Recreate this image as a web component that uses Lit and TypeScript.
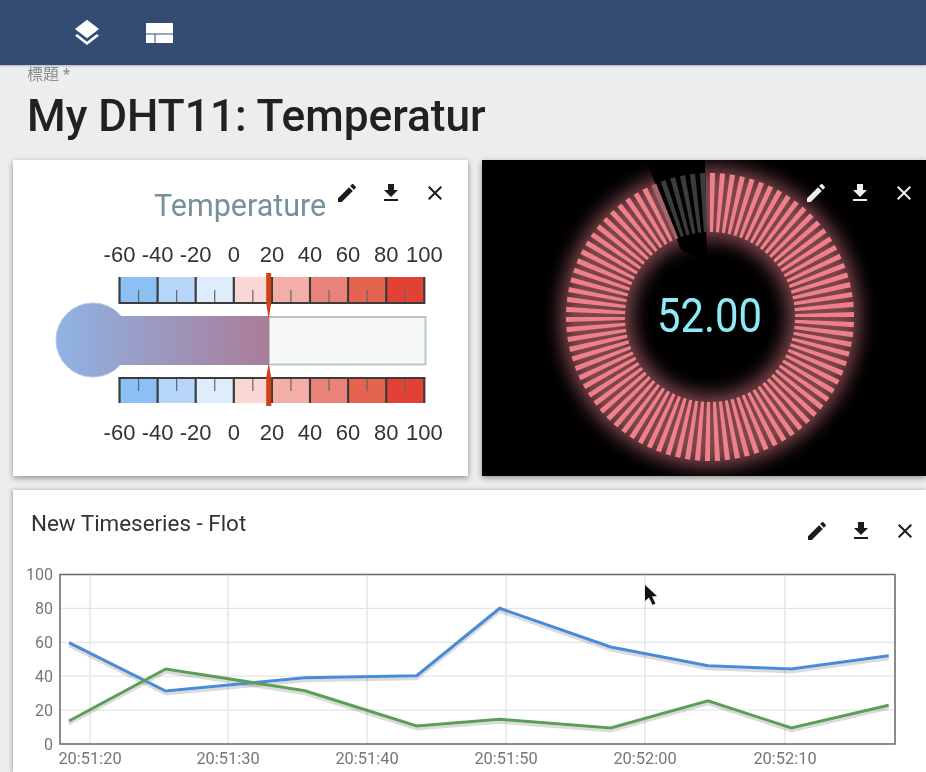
import { LitElement, css, html, svg } from 'lit';
import { customElement } from 'lit/decorators.js';

const EDIT = 'M3 17.25V21h3.75L17.81 9.94l-3.75-3.75L3 17.25zM20.71 7.04c.39-.39.39-1.02 0-1.41l-2.34-2.34c-.39-.39-1.02-.39-1.41 0l-1.83 1.83 3.75 3.75 1.83-1.83z';
const DOWNLOAD = 'M19 9h-4V3H9v6H5l7 7 7-7zM5 18v2h14v-2H5z';
const CLOSE = 'M19 6.41L17.59 5 12 10.59 6.41 5 5 6.41 10.59 12 5 17.59 6.41 19 12 13.41 17.59 19 19 17.59 13.41 12z';

const SCALE = [-60, -40, -20, 0, 20, 40, 60, 80, 100];
const CELLS = ['#8cc0f4', '#b5d6f8', '#deecfc', '#f8d7d5', '#f3aea8', '#e98379', '#e4644f', '#e24235'];
const STEP = 38.1;
const X0 = 119.5;

const TIMES = [
  [90, '20:51:20'],
  [228, '20:51:30'],
  [367, '20:51:40'],
  [506, '20:51:50'],
  [645, '20:52:00'],
  [785, '20:52:10'],
] as const;
const BLUE = '69,642.7 165.7,691 305,677.7 416.7,675.7 499.7,608.3 610.7,647 708,665.7 791.3,669 888.7,655.7';
const GREEN = '69,721 165.7,669 305,690.7 416.7,726 499.7,719.3 610.7,728 708,700.7 791.3,728 888.7,705.3';

function icon(d: string) {
  return html`<svg class="icon" viewBox="0 0 24 24"><path d=${d}></path></svg>`;
}

function actions() {
  return html`${icon(EDIT)}${icon(DOWNLOAD)}${icon(CLOSE)}`;
}

function scaleRow(y: number, tickY1: number, tickY2: number, lineY: number) {
  return svg`
    ${CELLS.map((c, i) => svg`<rect x=${X0 + STEP * i} y=${y} width=${STEP} height="26" fill=${c}></rect>`)}
    ${SCALE.map((_, i) => svg`<line x1=${X0 + STEP * i} x2=${X0 + STEP * i} y1=${y} y2=${y + 26} stroke="#3c3c3c" stroke-width="2.200"></line>`)}
    ${CELLS.map((_, i) => svg`<line x1=${X0 + STEP * (i + 0.5)} x2=${X0 + STEP * (i + 0.5)} y1=${tickY1} y2=${tickY2} stroke="#666" stroke-width="1.200"></line>`)}
    <line x1=${X0 - 1} x2=${X0 + STEP * 8 + 1} y1=${lineY} y2=${lineY} stroke="#3c3c3c" stroke-width="2.200"></line>
  `;
}

function thermometer() {
  return svg`
    <svg class="fill" viewBox="13 160 455 316">
      <defs>
        <linearGradient id="mercury" gradientUnits="userSpaceOnUse" x1="56" x2="269" y1="0" y2="0">
          <stop offset="0" stop-color="#8fb3e4"></stop>
          <stop offset="1" stop-color="#aa7c98"></stop>
        </linearGradient>
      </defs>
      <text class="gauge-title" x="154" y="216">Temperature</text>
      ${SCALE.map((v, i) => svg`
        <text class="scale" x=${X0 + STEP * i} y="262">${v}</text>
        <text class="scale" x=${X0 + STEP * i} y="440">${v}</text>
      `)}
      ${scaleRow(277, 290, 302, 303)}
      ${scaleRow(377, 378, 391, 378)}
      <rect x="269" y="317" width="156.500" height="47.500" fill="#f6f7f7" stroke="#b9c5cc" stroke-width="2"></rect>
      <circle cx="93" cy="340" r="37" fill="url(#mercury)" stroke="#b4c6e2" stroke-width="1"></circle>
      <rect x="120" y="316" width="149" height="49" fill="url(#mercury)"></rect>
      <path d="M266.200 273L271.200 273L271.200 303L269 318L268.500 318L266.200 303Z" fill="#cf4218"></path>
      <path d="M268.500 364L269 364L271.200 378L271.200 406L266.200 406L266.200 378Z" fill="#cf4218"></path>
    </svg>
  `;
}

function ringBars() {
  const cx = 710;
  const cy = 317;
  const rIn = 85;
  const rOut = 144;
  const bars = [];
  for (let i = 0; i < 90; i++) {
    const deg = 1 + i * 4;
    const a = (deg * Math.PI) / 180;
    const sin = Math.sin(a);
    const cos = Math.cos(a);
    const px = (r: number, w: number) => `${cx + r * sin + w * cos},${cy - r * cos + w * sin}`;
    const points = [px(rIn, -1.6), px(rOut, -2.6), px(rOut, 2.6), px(rIn, 1.6)].join(' ');
    const off = deg >= 341;
    const fading = deg === 337;
    bars.push(svg`<polygon points=${points} fill=${off ? '#3b3d3c' : fading ? '#a8626a' : '#ef7f89'}></polygon>`);
  }
  return bars;
}

function radial() {
  return svg`
    <svg class="fill" viewBox="482 160 444 316">
      <defs>
        <filter id="glow" x="-30%" y="-30%" width="160%" height="160%">
          <feGaussianBlur stdDeviation="9"></feGaussianBlur>
        </filter>
        <clipPath id="gap">
          <path d="M482 160H926V476H482ZM707 262L705 160L646 160L681 250Z" clip-rule="evenodd"></path>
        </clipPath>
      </defs>
      <g clip-path="url(#gap)">
        <circle cx="710" cy="317" r="114" fill="none" stroke="#7c444b" stroke-width="72" filter="url(#glow)"></circle>
      </g>
      ${ringBars()}
      <text class="lcd" x="657" y="332" textLength="105" lengthAdjust="spacingAndGlyphs">52.00</text>
    </svg>
  `;
}

function chart() {
  return svg`
    <svg class="chart" viewBox="13 560 913 212">
      ${[0, 1, 2, 3, 4, 5].map((i) => {
        const y = 744 - 33.9 * i;
        return svg`
          ${i > 0 && i < 5 ? svg`<line x1="60" x2="895" y1=${y} y2=${y} stroke="#e4e6e6" stroke-width="1.300"></line>` : ''}
          <text class="y-label" x="53" y=${y + 5.5}>${i * 20}</text>
        `;
      })}
      ${TIMES.map(([x, t]) => svg`
        <line x1=${x} x2=${x} y1="575" y2="744" stroke="#e4e6e6" stroke-width="1.500"></line>
        <text class="x-label" x=${x} y="764">${t}</text>
      `)}
      <polyline points=${BLUE} transform="translate(0 3)" fill="none" stroke="#000" stroke-opacity=".14" stroke-width="3"></polyline>
      <polyline points=${GREEN} transform="translate(0 3)" fill="none" stroke="#000" stroke-opacity=".14" stroke-width="3"></polyline>
      <polyline points=${BLUE} fill="none" stroke="#4a8ad8" stroke-width="3"></polyline>
      <polyline points=${GREEN} fill="none" stroke="#5a9e58" stroke-width="3"></polyline>
      <rect x="60" y="574.500" width="835" height="169.500" fill="none" stroke="#6e6e6e" stroke-width="1.600"></rect>
      <path d="M645 585L645 601L649 597.500L652.500 605L655.500 603.500L652 596.500L657 596Z" fill="#111"></path>
    </svg>
  `;
}

@customElement('app-root')
export class AppRoot extends LitElement {
  render() {
    return html`
      <header class="toolbar">
        <svg class="tool layers" viewBox="0 0 24 24">
          <path d="M11.99 18.54l-7.37-5.73L3 14.07l9 7 9-7-1.63-1.27-7.38 5.74zM12 16l7.36-5.73L21 9l-9-7-9 7 1.63 1.27L12 16z"></path>
        </svg>
        <svg class="tool quilt" viewBox="0 0 27 20">
          <path d="M0 0H27V10.500H0ZM0 11.500H8.500V20H0ZM9.500 11.500H27V20H9.500Z"></path>
        </svg>
      </header>
      <div class="heading">
        <div class="label">標題 *</div>
        <div class="title">My DHT11: Temperatur</div>
      </div>
      <main class="grid">
        <section class="card gauge">
          ${thermometer()}
          <div class="actions">${actions()}</div>
        </section>
        <section class="card gauge dark">
          ${radial()}
          <div class="actions">${actions()}</div>
        </section>
        <section class="card wide">
          <div class="card-head">
            <div class="card-title">New Timeseries - Flot</div>
            <div class="actions inline">${actions()}</div>
          </div>
          ${chart()}
        </section>
      </main>
    `;
  }

  static styles = css`
    :host {
      display: block;
      height: 772px;
      overflow: hidden;
      background: #eceeed;
      font-family: Roboto, 'Noto Sans CJK TC', sans-serif;
      filter: blur(0.5px);
    }

    .toolbar {
      height: 65px;
      background: #324c72;
      display: flex;
      align-items: center;
      gap: 43px;
      padding-left: 71px;
      box-shadow: 0 1px 2px rgba(0, 0, 0, 0.25);
    }

    .tool {
      fill: #fff;
      display: block;
    }

    .layers {
      width: 32px;
      height: 32px;
    }

    .quilt {
      width: 27px;
      height: 20px;
    }

    .heading {
      height: 95px;
      padding-left: 27px;
    }

    .label {
      font-size: 16px;
      line-height: 18px;
      padding-top: 1px;
      color: #8a8a8a;
    }

    .title {
      font-size: 44.2px;
      font-weight: 500;
      line-height: 46px;
      margin-top: 9px;
      color: #212121;
    }

    .grid {
      display: grid;
      grid-template-columns: 455px 444px;
      grid-template-rows: 316px 282px;
      column-gap: 14px;
      row-gap: 14px;
      padding-left: 13px;
    }

    .card {
      position: relative;
      background: #fff;
      box-shadow: 0 2px 6px rgba(0, 0, 0, 0.4);
    }

    .dark {
      background: #000;
    }

    .dark .icon {
      fill: #eee;
    }

    .wide {
      grid-column: 1 / 3;
      width: 913px;
      box-shadow: -1px 0 4px rgba(0, 0, 0, 0.3);
    }

    .fill {
      display: block;
      width: 100%;
      height: 100%;
    }

    .actions {
      position: absolute;
      top: 21px;
      right: 21px;
      display: flex;
      gap: 20px;
    }

    .dark .actions {
      right: 10px;
    }

    .actions.inline {
      position: static;
      margin-top: 29px;
    }

    .icon {
      display: block;
      width: 24px;
      height: 24px;
      fill: #1c1c1c;
    }

    .card-head {
      height: 70px;
      display: flex;
      justify-content: space-between;
      padding: 0 9px 0 18px;
    }

    .card-title {
      font-size: 22.4px;
      line-height: 24px;
      margin-top: 21px;
      color: #333;
    }

    .chart {
      display: block;
      width: 913px;
      height: 212px;
    }

    .gauge-title {
      font-family: Roboto, sans-serif;
      font-size: 30.5px;
      fill: #78909c;
    }

    .scale {
      font-family: 'Liberation Sans', Arial, sans-serif;
      font-size: 22px;
      fill: #333;
      text-anchor: middle;
    }

    .lcd {
      font-family: Roboto, sans-serif;
      font-weight: 400;
      font-size: 48px;
      fill: #8eeaf8;
    }

    .y-label {
      font-family: Roboto, sans-serif;
      font-size: 16px;
      fill: #777;
      text-anchor: end;
    }

    .x-label {
      font-family: Roboto, sans-serif;
      font-size: 16.4px;
      fill: #777;
      text-anchor: middle;
    }
  `;
}
